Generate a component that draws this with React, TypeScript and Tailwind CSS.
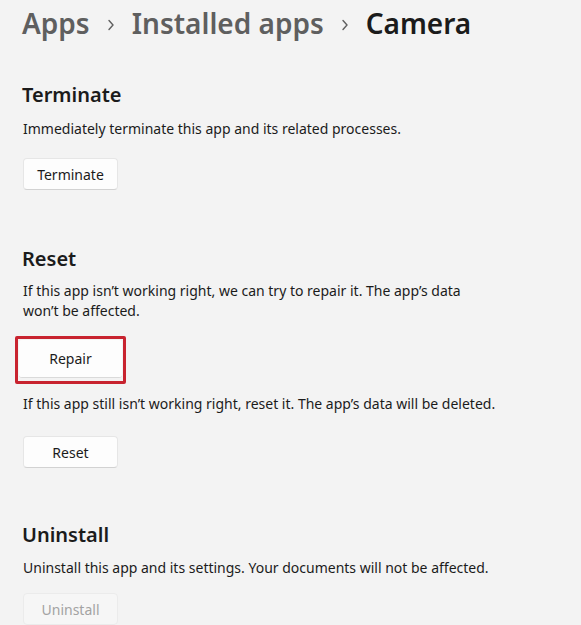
import React from 'react'

const font = { fontFamily: '"Noto Sans", "Open Sans", sans-serif' }

function Chevron() {
  return (
    <svg width="8" height="12" viewBox="0 0 8 12" className="mx-[17px] mt-[3px] shrink-0">
      <path d="M2 1.5 L6 6 L2 10.5" fill="none" stroke="#5f5f5f" strokeWidth="1.4" strokeLinecap="round" strokeLinejoin="round" />
    </svg>
  )
}

function Btn({ label, disabled }: { label: string; disabled?: boolean }) {
  return (
    <button
      className={
        disabled
          ? 'h-[32px] w-[95px] rounded-[4px] border border-[#ebebeb] bg-[#f6f6f6] text-[14px] text-[#a3a3a3]'
          : 'h-[32px] w-[95px] rounded-[4px] border border-[#e6e6e6] border-b-[#d2d2d2] bg-[#fdfdfd] text-[14px] text-[#1b1b1b]'
      }
    >
      {label}
    </button>
  )
}

export default function App() {
  return (
    <main className="min-h-screen w-[581px] h-[625px] overflow-hidden bg-[#f3f3f3] pl-[22px]" style={font}>
      <div className="flex items-center pt-[5px] text-[28px] leading-[36px] font-semibold">
        <span className="text-[#5f5f5f]">Apps</span>
        <Chevron />
        <span className="text-[#5f5f5f]">Installed apps</span>
        <Chevron />
        <span className="text-[#1b1b1b]">Camera</span>
      </div>

      <section className="mt-[40px]">
        <h2 className="text-[20px] leading-[28px] font-semibold text-[#1b1b1b]">Terminate</h2>
        <p className="mt-[10px] pl-[1px] text-[14px] leading-[20px] text-[#1b1b1b]">
          Immediately terminate this app and its related processes.
        </p>
        <div className="mt-[19px] pl-[1px]">
          <Btn label="Terminate" />
        </div>
      </section>

      <section className="mt-[55px]">
        <h2 className="text-[20px] leading-[28px] font-semibold text-[#1b1b1b]">Reset</h2>
        <p className="mt-[8px] max-w-[470px] pl-[1px] text-[14px] leading-[20px] text-[#1b1b1b]">
          If this app isn’t working right, we can try to repair it. The app’s data won’t be affected.
        </p>
        <div className="mt-[15px] ml-[-7px] w-[111px] h-[48px] rounded-[2px] border-[3px] border-[#c8232f] p-[1px]">
          <button className="h-[38px] w-full rounded-[3px] border-b border-[#dadada] bg-[#fdfdfd] text-[14px] text-[#1b1b1b]">
            Repair
          </button>
        </div>
        <p className="mt-[10px] pl-[1px] text-[14px] leading-[20px] text-[#1b1b1b]">
          If this app still isn’t working right, reset it. The app’s data will be deleted.
        </p>
        <div className="mt-[22px] pl-[1px]">
          <Btn label="Reset" />
        </div>
      </section>

      <section className="mt-[53px]">
        <h2 className="text-[20px] leading-[28px] font-semibold text-[#1b1b1b]">Uninstall</h2>
        <p className="mt-[9px] pl-[1px] text-[14px] leading-[20px] text-[#1b1b1b]">
          Uninstall this app and its settings. Your documents will not be affected.
        </p>
        <div className="mt-[15px] pl-[1px]">
          <Btn label="Uninstall" disabled />
        </div>
      </section>
    </main>
  )
}
